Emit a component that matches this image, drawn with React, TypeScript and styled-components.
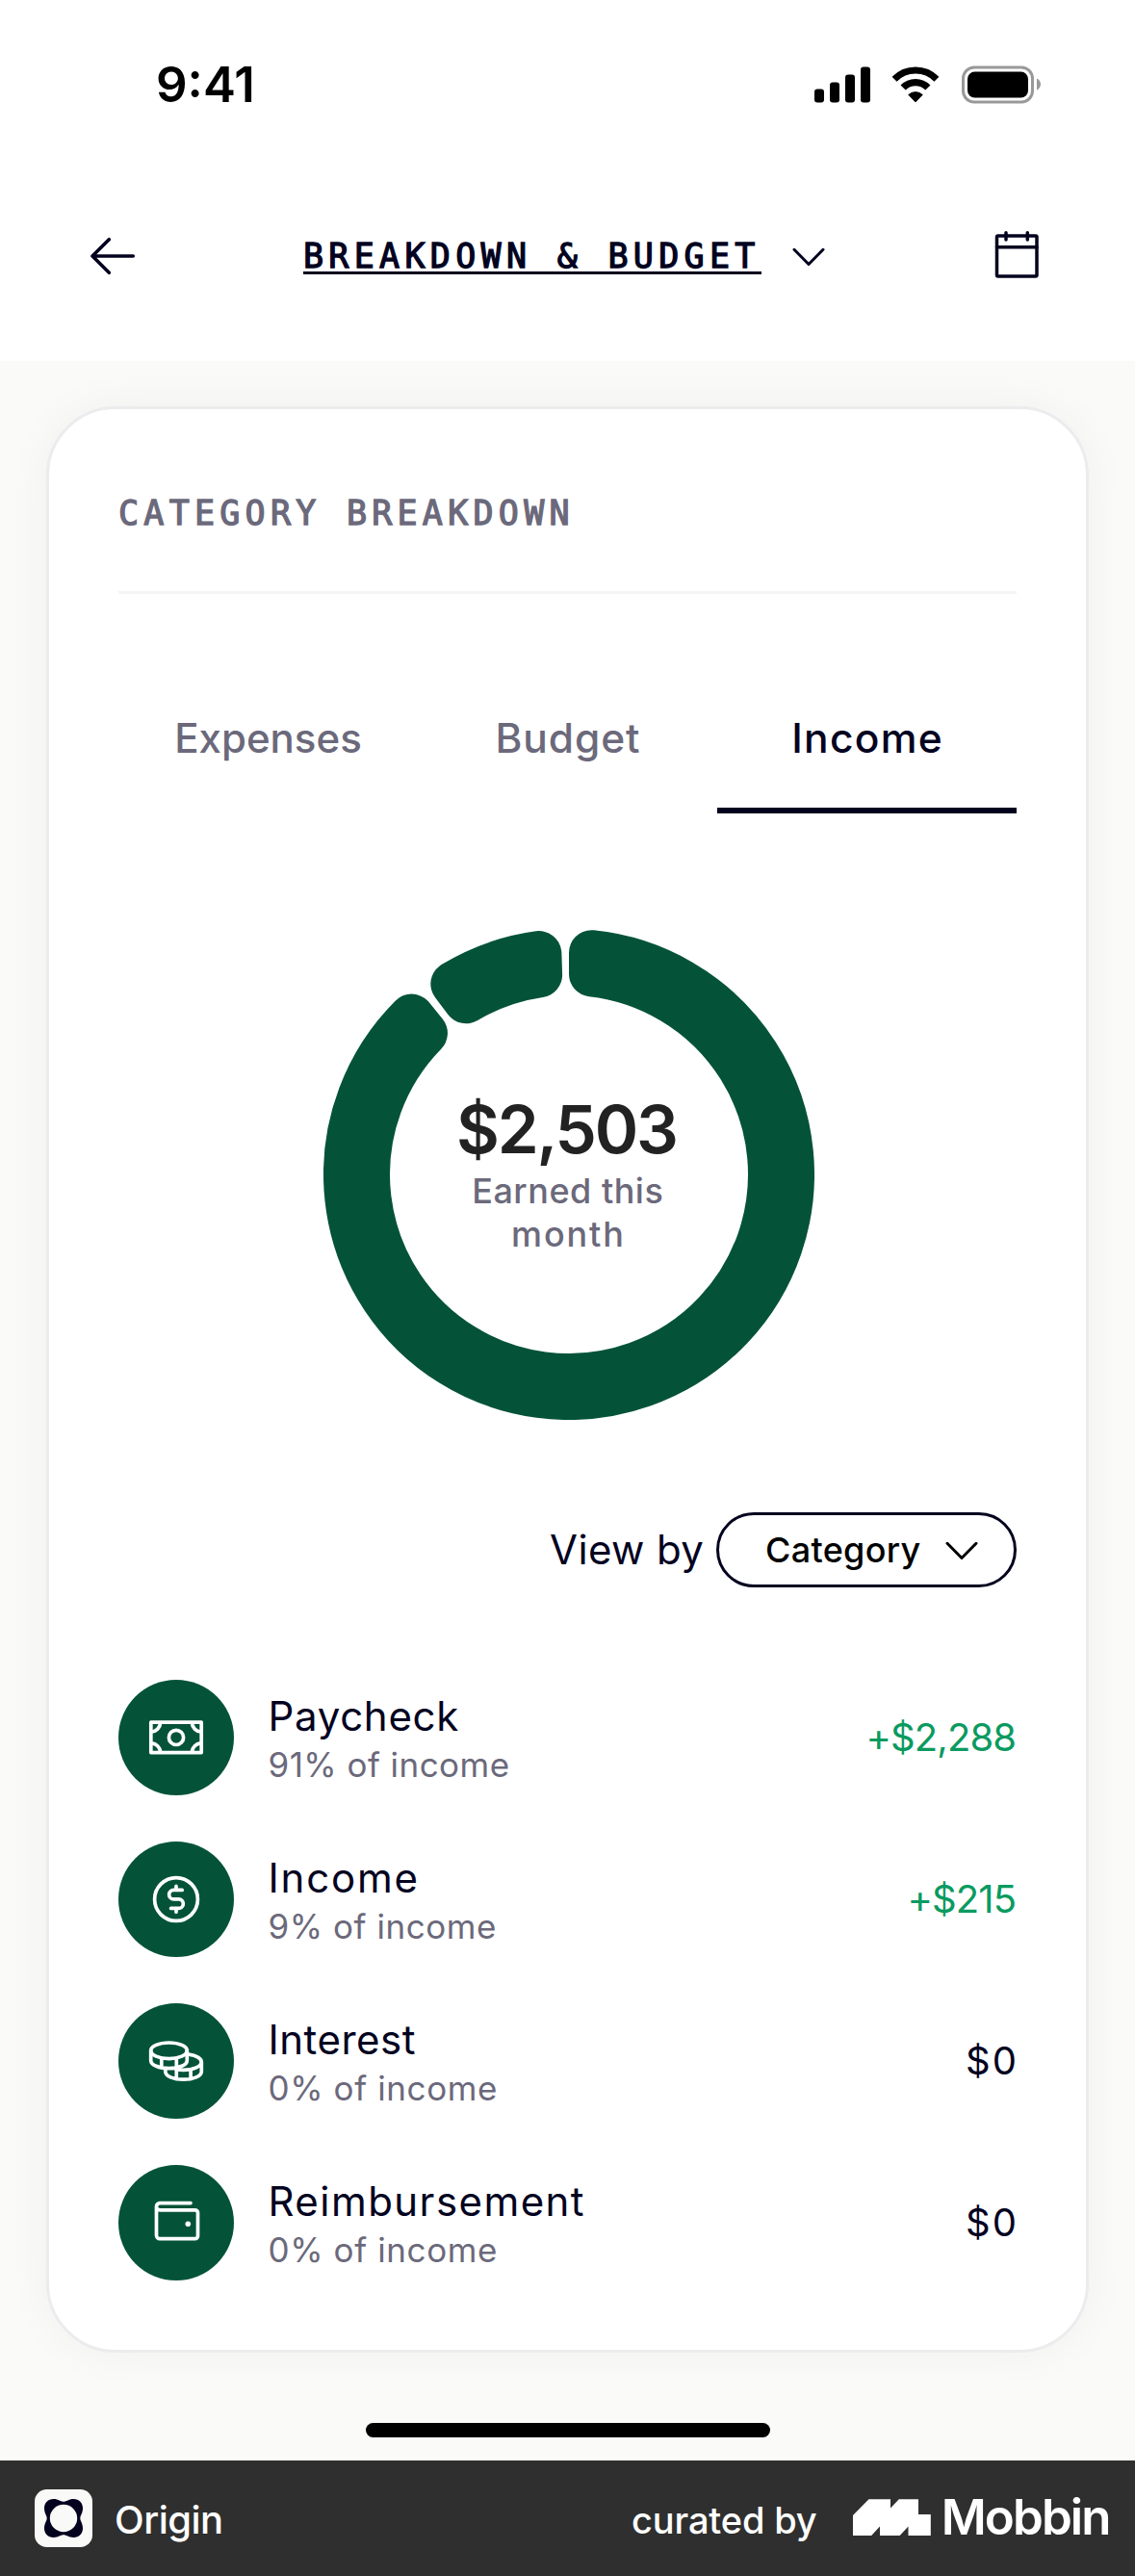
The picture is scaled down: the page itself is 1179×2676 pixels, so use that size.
import React from 'react';
import styled, { createGlobalStyle } from 'styled-components';

const ink = '#03031f';
const muted = '#6b697b';
const green = '#045338';
const positive = '#0a9a60';

const Global = createGlobalStyle`
  *, *::before, *::after { box-sizing: border-box; }
  html, body { margin: 0; padding: 0; background: #fafaf8; }
  body { font-family: Inter, "Liberation Sans", sans-serif; color: ${ink}; }
  svg { display: block; flex: none; }
`;

const Screen = styled.div`
  width: 1179px;
  height: 2676px;
  display: flex;
  flex-direction: column;
  background: #fafaf8;
  overflow: hidden;
`;

/* Letter spacing that leaves no trailing gap after the last glyph */
const Label = styled.span<{ $size: number; $line: number; $track?: number; $weight?: number; $color?: string }>`
  display: block;
  font-size: ${p => p.$size}px;
  line-height: ${p => p.$line}px;
  font-weight: ${p => p.$weight ?? 400};
  letter-spacing: ${p => p.$track ?? 0}px;
  margin-right: ${p => -(p.$track ?? 0)}px;
  color: ${p => p.$color ?? ink};
  white-space: nowrap;
`;

const StatusBar = styled.div`
  height: 175px;
  padding: 0 98px 0 162px;
  display: flex;
  align-items: center;
  justify-content: space-between;
  background: #fff;
`;

const StatusIcons = styled.div`
  display: flex;
  align-items: center;
  gap: 22.7px;
`;

const NavBar = styled.header`
  height: 200px;
  padding: 0 98px 18px 93px;
  display: flex;
  align-items: center;
  background: #fff;
`;

const NavTitle = styled.div`
  display: flex;
  align-items: center;
  gap: 32px;
  margin: 0 auto 0 174px;
`;

const mono = `
  font-family: "DejaVu Sans Mono", "Liberation Mono", monospace;
  font-size: 35px;
  white-space: pre;
`;

const NavTitleText = styled.h1`
  ${mono}
  width: 476px;
  margin: 3px 0 0;
  font-weight: 400;
  line-height: 32px;
  letter-spacing: 5.3px;
  text-indent: 0;
  color: ${ink};
  -webkit-text-stroke: 1.3px ${ink};
  border-bottom: 3px solid ${ink};
`;

const Card = styled.section`
  width: 1083px;
  height: 2022px;
  margin: 47px 48px 0;
  padding: 0 72px;
  display: flex;
  flex-direction: column;
  flex: none;
  background: #fff;
  border: 3px solid #ececee;
  border-radius: 72px;
  box-shadow: 0 0 48px rgba(0, 0, 0, 0.045);
`;

const CardHeader = styled.h2`
  ${mono}
  margin: 0;
  padding: 90px 0 63px;
  font-weight: 400;
  line-height: 36px;
  letter-spacing: 5.25px;
  color: ${muted};
  -webkit-text-stroke: 1.3px ${muted};
  border-bottom: 3px solid #f5f5f5;
`;

const Tabs = styled.div`
  display: flex;
  height: 150px;
  margin-top: 78px;
`;

const Tab = styled.div<{ $active?: boolean }>`
  flex: 1;
  display: flex;
  align-items: center;
  justify-content: center;
  border-bottom: 6px solid ${p => (p.$active ? ink : 'transparent')};
`;

const Chart = styled.div`
  display: grid;
  justify-items: center;
  height: 510px;
  margin-top: 120px;
  & > * { grid-area: 1 / 1; }
`;

const Ring = styled.svg`
  margin-left: 3px;
`;

const ChartText = styled.div`
  display: flex;
  flex-direction: column;
  align-items: center;
  padding-top: 167px;
`;

const ViewRow = styled.div`
  display: flex;
  align-items: center;
  justify-content: flex-end;
  gap: 13px;
  height: 78px;
  margin-top: 96px;
`;

const Pill = styled.div`
  width: 312px;
  height: 78px;
  padding: 0 37px 0 48px;
  display: flex;
  align-items: center;
  justify-content: space-between;
  border: 3px solid ${ink};
  border-radius: 39px;
`;

const List = styled.div`
  display: flex;
  flex-direction: column;
  gap: 48px;
  margin-top: 96px;
`;

const Row = styled.div`
  display: flex;
  align-items: center;
  gap: 35.5px;
  height: 120px;
`;

const Disc = styled.div`
  width: 120px;
  height: 120px;
  flex: none;
  border-radius: 50%;
  background: ${green};
`;

const RowText = styled.div`
  flex: 1;
`;

const HomeIndicator = styled.div`
  width: 420px;
  height: 15px;
  flex: none;
  margin: 73px auto 24px;
  border-radius: 8px;
  background: #000;
`;

const Footer = styled.footer`
  height: 120px;
  flex: none;
  padding: 0 24.5px 0 36px;
  display: flex;
  align-items: center;
  background: #2f2f2f;
`;

const AppName = styled.div`
  padding-top: 3px;
  margin: 0 auto 0 23px;
`;

const Curated = styled.div`
  padding-top: 4px;
  margin-right: 37px;
`;

const Brand = styled.div`
  display: flex;
  align-items: center;
  gap: 11px;
  padding-bottom: 2px;
`;

const ChevronSvg = styled.svg`
  margin-top: 2px;
`;

const Signal = () => (
  <svg width="58" height="40" viewBox="0 0 58 40">
    {[24.5, 17.5, 9.5, 1.5].map((y, i) => (
      <rect key={y} x={i * 16} y={y} width="10" height={38.5 - y} rx="3" />
    ))}
  </svg>
);

const Wifi = () => (
  <svg width="50" height="40" viewBox="0 0 50 40">
    <path d="M3.1 14.3A30.5 30.5 0 0 1 46.9 14.3" fill="none" stroke="#000" strokeWidth="7" />
    <path d="M12.1 23.1A17.9 17.9 0 0 1 37.9 23.1" fill="none" stroke="#000" strokeWidth="7.2" />
    <path d="M17.7 30.4A10.8 10.8 0 0 1 32.3 30.4L25 38Z" stroke="#000" strokeWidth="0.8" strokeLinejoin="round" />
  </svg>
);

const Battery = () => (
  <svg width="82" height="40" viewBox="0 0 82 40">
    <rect x="1.5" y="2" width="72" height="36" rx="11.5" fill="none" stroke="#999" strokeWidth="3" />
    <rect x="6" y="6.5" width="63" height="27" rx="7.5" />
    <path d="M78 13.5C80.5 14.7 82 17 82 19.5S80.5 24.5 78 25.7Z" fill="#999" />
  </svg>
);

const BackArrow = () => (
  <svg width="48" height="40" viewBox="0 0 48 40" fill="none" stroke={ink} strokeWidth="3.6" strokeLinecap="round" strokeLinejoin="round">
    <path d="M45.3 20H3M20.3 2.7L3 20L20.3 37.3" />
  </svg>
);

const Chevron = ({ color }: { color: string }) => (
  <ChevronSvg width="34" height="22" viewBox="0 0 34 22" fill="none" stroke={color} strokeWidth="3" strokeLinecap="round" strokeLinejoin="round">
    <path d="M2 3.3L17 18.5L32 3.3" />
  </ChevronSvg>
);

const CalendarIcon = () => (
  <svg width="48" height="52" viewBox="0 0 48 52" fill="none" stroke={ink} strokeWidth="3.5" strokeLinecap="round" strokeLinejoin="round">
    <rect x="2.5" y="4.9" width="41.5" height="42" rx="1.2" />
    <path d="M2.5 16.8H44M12 1.8V9M34.3 1.8V9" />
  </svg>
);

/* Ring sector: the inset outline gets its rounded corners from a round-joined stroke */
const OUTER = 255;
const INNER = 186;
const CORNER = 23.5;
const sector = (startDeg: number, endDeg: number) => {
  const a = (startDeg * Math.PI) / 180;
  const b = (endDeg * Math.PI) / 180;
  const ro = OUTER - CORNER;
  const ri = INNER + CORNER;
  const point = (r: number, t: number) => `${(255 + r * Math.sin(t)).toFixed(2)} ${(255 - r * Math.cos(t)).toFixed(2)}`;
  const o = Math.asin(CORNER / ro);
  const i = Math.asin(CORNER / ri);
  const large = b - a > Math.PI ? 1 : 0;
  return `M${point(ro, a + o)}A${ro} ${ro} 0 ${large} 1 ${point(ro, b - o)}L${point(ri, b - i)}A${ri} ${ri} 0 ${large} 0 ${point(ri, a + i)}Z`;
};

const Donut = () => (
  <Ring width="510" height="510" viewBox="0 0 510 510" fill={green} stroke={green} strokeWidth={CORNER * 2} strokeLinejoin="round">
    <path d={sector(0, 320.9)} />
    <path d={sector(322.9, 358.1)} />
  </Ring>
);

const Glyph = ({ children }: { children: React.ReactNode }) => (
  <svg width="120" height="120" viewBox="0 0 120 120" fill="none" stroke="#fff" strokeWidth="3.7" strokeLinecap="round" strokeLinejoin="round">
    {children}
  </svg>
);

const Bill = () => (
  <Glyph>
    <rect x="33.8" y="44.2" width="52.4" height="31.4" />
    <circle cx="60" cy="59.9" r="7.6" />
    <path d="M43.6 45A10 10 0 0 1 34.6 54M76.4 45A10 10 0 0 0 85.4 54M43.6 74.8A10 10 0 0 0 34.6 65.8M76.4 74.8A10 10 0 0 1 85.4 65.8" />
  </Glyph>
);

const Dollar = () => (
  <Glyph>
    <circle cx="60" cy="60" r="22.4" />
    <path d="M66.2 50.4H57.4A4.7 4.7 0 0 0 57.4 59.9H62.6A4.7 4.7 0 0 1 62.6 69.4H54.6M60 46.4V50.4M60 69.4V73.2" />
  </Glyph>
);

const Coins = () => (
  <Glyph>
    <ellipse cx="52.5" cy="49.3" rx="18.8" ry="8.3" />
    <path d="M33.7 49.3V59.4C33.7 64 42 67.7 52.5 67.7S71.3 64 71.3 59.4V49.3M44.8 57V66.6M60.3 57V66.6" />
    <path d="M73 53.2C81 54.2 86.3 57.3 86.3 61C86.3 65.6 78 69.3 67.5 69.3C64.8 69.3 62.3 69.1 60 68.6" />
    <path d="M86.3 61V71C86.3 75.6 78 79.2 67.5 79.2S48.8 75.6 48.8 71V68M60.3 68.6V78M75.1 69V78" />
  </Glyph>
);

const Wallet = () => (
  <Glyph>
    <path d="M75 39.6H43.1A3.6 3.6 0 0 0 39.5 43.2A3.6 3.6 0 0 0 43.1 46.8H79.5A3 3 0 0 1 82.5 49.8V73.7A3 3 0 0 1 79.5 76.7H43A3.5 3.5 0 0 1 39.5 73.2V43.2" />
    <circle cx="72.3" cy="61.2" r="2.8" fill="#fff" stroke="none" />
  </Glyph>
);

const OriginLogo = () => (
  <svg width="60" height="60" viewBox="0 0 60 60">
    <rect width="60" height="60" rx="12.5" fill="#f9f9f7" />
    <path
      fill={ink}
      d="M30 12.8C33 12.8 35 10 40.5 10C46 10 50 14 50 19.5C50 25 47.3 27 47.3 30C47.3 33 50 35 50 40.5C50 46 46 50 40.5 50C35 50 33 47.3 30 47.3C27 47.3 25 50 19.5 50C14 50 10 46 10 40.5C10 35 12.7 33 12.7 30C12.7 27 10 25 10 19.5C10 14 14 10 19.5 10C25 10 27 12.8 30 12.8Z"
    />
    <circle cx="30" cy="30" r="14.2" fill="#f9f9f7" />
  </svg>
);

const MobbinMark = () => (
  <svg width="81" height="38" viewBox="0 0 81 38" fill="#fff">
    <path d="M0 17L16.5 0.3H39V9.5L47.8 0.3H68V16H80.8V38H57.5V28.5L48.7 38H28V28.5L19.2 38H0Z" />
  </svg>
);

type Entry = {
  name: string;
  nameTrack: number;
  share: string;
  shareTrack: number;
  amount: string;
  amountTrack: number;
  gain?: boolean;
  Icon: () => React.ReactElement;
};

const entries: Entry[] = [
  { name: 'Paycheck', nameTrack: 0.7, share: '91% of income', shareTrack: 0.45, amount: '+$2,288', amountTrack: -0.9, gain: true, Icon: Bill },
  { name: 'Income', nameTrack: 1.8, share: '9% of income', shareTrack: 0.55, amount: '+$215', amountTrack: -0.9, gain: true, Icon: Dollar },
  { name: 'Interest', nameTrack: 0.5, share: '0% of income', shareTrack: 0.6, amount: '$0', amountTrack: 2, Icon: Coins },
  { name: 'Reimbursement', nameTrack: 1.45, share: '0% of income', shareTrack: 0.6, amount: '$0', amountTrack: 2, Icon: Wallet },
];

export default function App() {
  return (
    <Screen>
      <Global />
      <StatusBar>
        <Label $size={51} $line={60} $weight={600} $track={0} $color="#000">9:41</Label>
        <StatusIcons>
          <Signal />
          <Wifi />
          <Battery />
        </StatusIcons>
      </StatusBar>
      <NavBar>
        <BackArrow />
        <NavTitle>
          <NavTitleText>BREAKDOWN &amp; BUDGET</NavTitleText>
          <Chevron color={ink} />
        </NavTitle>
        <CalendarIcon />
      </NavBar>

      <Card>
        <CardHeader>CATEGORY BREAKDOWN</CardHeader>
        <Tabs>
          <Tab><Label $size={42} $line={54} $weight={500} $color={muted}>Expenses</Label></Tab>
          <Tab><Label $size={42.5} $line={54} $weight={500} $track={0.9} $color={muted}>Budget</Label></Tab>
          <Tab $active><Label $size={42.5} $line={54} $weight={500} $track={1.3}>Income</Label></Tab>
        </Tabs>

        <Chart>
          <Donut />
          <ChartText>
            <Label $size={69} $line={83} $weight={600} $track={-2.2} $color="#222">$2,503</Label>
            <Label $size={36} $line={45} $weight={500} $track={0.5} $color={muted}>Earned this</Label>
            <Label $size={36} $line={45} $weight={500} $track={1.9} $color={muted}>month</Label>
          </ChartText>
        </Chart>

        <ViewRow>
          <Label $size={42} $line={54} $track={0.4}>View by</Label>
          <Pill>
            <Label $size={36} $line={46} $weight={500} $track={0.3} $color="#000">Category</Label>
            <Chevron color="#000" />
          </Pill>
        </ViewRow>

        <List>
          {entries.map(({ Icon, ...e }) => (
            <Row key={e.name}>
              <Disc><Icon /></Disc>
              <RowText>
                <Label $size={42} $line={56} $track={e.nameTrack}>{e.name}</Label>
                <Label $size={35} $line={44} $track={e.shareTrack} $color={muted}>{e.share}</Label>
              </RowText>
              <Label $size={40} $line={54} $track={e.amountTrack} $color={e.gain ? positive : ink}>{e.amount}</Label>
            </Row>
          ))}
        </List>
      </Card>

      <HomeIndicator />
      <Footer>
        <OriginLogo />
        <AppName><Label $size={40} $line={50} $weight={500} $track={-0.5} $color="#fff">Origin</Label></AppName>
        <Curated><Label $size={38} $line={50} $weight={500} $track={-0.15} $color="#fff">curated by</Label></Curated>
        <Brand>
          <MobbinMark />
          <Label $size={51} $line={60} $weight={600} $track={-1.9} $color="#fff">Mobbin</Label>
        </Brand>
      </Footer>
    </Screen>
  );
}
